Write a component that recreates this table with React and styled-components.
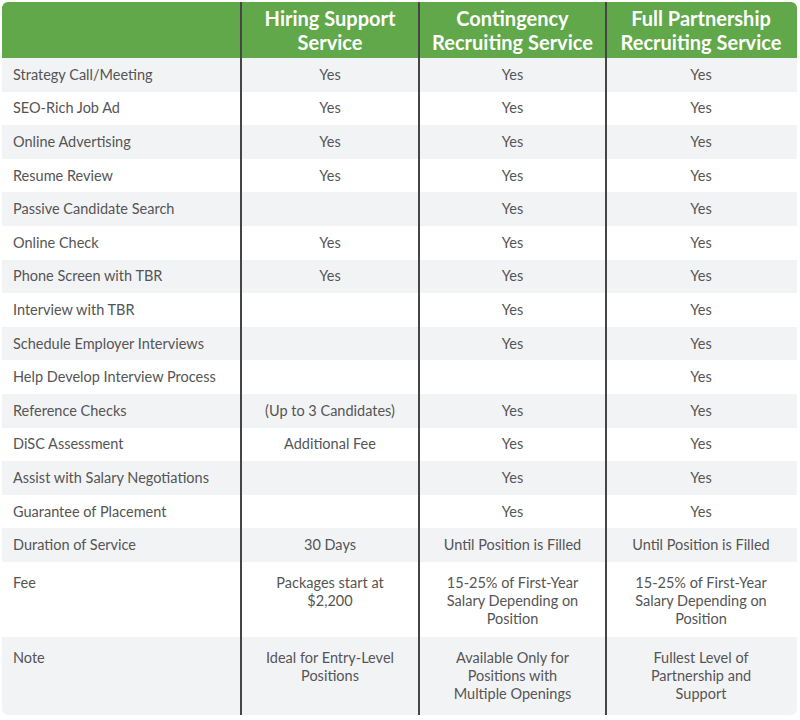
import React from 'react'
import styled, { createGlobalStyle } from 'styled-components'

const GlobalStyle = createGlobalStyle`
  * { box-sizing: border-box; }
  body {
    margin: 0;
    background: #ffffff;
    font-family: Lato, "Liberation Sans", sans-serif;
  }
`;

const headerLines = [
  ['Hiring Support', 'Service'],
  ['Contingency', 'Recruiting Service'],
  ['Full Partnership', 'Recruiting Service'],
];

// label, hiring, contingency, full
const rows = [
  ['Strategy Call/Meeting', 'Yes', 'Yes', 'Yes'],
  ['SEO-Rich Job Ad', 'Yes', 'Yes', 'Yes'],
  ['Online Advertising', 'Yes', 'Yes', 'Yes'],
  ['Resume Review', 'Yes', 'Yes', 'Yes'],
  ['Passive Candidate Search', '', 'Yes', 'Yes'],
  ['Online Check', 'Yes', 'Yes', 'Yes'],
  ['Phone Screen with TBR', 'Yes', 'Yes', 'Yes'],
  ['Interview with TBR', '', 'Yes', 'Yes'],
  ['Schedule Employer Interviews', '', 'Yes', 'Yes'],
  ['Help Develop Interview Process', '', '', 'Yes'],
  ['Reference Checks', '(Up to 3 Candidates)', 'Yes', 'Yes'],
  ['DiSC Assessment', 'Additional Fee', 'Yes', 'Yes'],
  ['Assist with Salary Negotiations', '', 'Yes', 'Yes'],
  ['Guarantee of Placement', '', 'Yes', 'Yes'],
  ['Duration of Service', '30 Days', 'Until Position is Filled', 'Until Position is Filled'],
];

const tallRows = [
  {
    label: 'Fee',
    cells: [
      ['Packages start at', '$2,200'],
      ['15-25% of First-Year', 'Salary Depending on', 'Position'],
      ['15-25% of First-Year', 'Salary Depending on', 'Position'],
    ],
    height: 75,
  },
  {
    label: 'Note',
    cells: [
      ['Ideal for Entry-Level', 'Positions'],
      ['Available Only for', 'Positions with', 'Multiple Openings'],
      ['Fullest Level of', 'Partnership and', 'Support'],
    ],
    height: 78,
  },
];

const App = () => {
  return (
    <>
      <GlobalStyle />
      <StPage>
        <StTable>
          <StHeader>
            <StHeadCell />
            {headerLines.map((lines) => (
              <StHeadCell key={lines.join(' ')}>
                {lines.map((l) => <div key={l}>{l}</div>)}
              </StHeadCell>
            ))}
          </StHeader>

          {rows.map((r, i) => (
            <StRow key={r[0]} $striped={i % 2 === 0}>
              <StLabel>{r[0]}</StLabel>
              <StCell>{r[1]}</StCell>
              <StCell>{r[2]}</StCell>
              <StCell>{r[3]}</StCell>
            </StRow>
          ))}

          {tallRows.map((r, i) => (
            <StRow key={r.label} $striped={(rows.length + i) % 2 === 0} $height={r.height}>
              <StLabel $tall>{r.label}</StLabel>
              {r.cells.map((lines, j) => (
                <StCell key={j} $tall>
                  {lines.map((l, k) => <div key={k}>{l}</div>)}
                </StCell>
              ))}
            </StRow>
          ))}
        </StTable>
      </StPage>
    </>
  )
}

export default App

const grid = `
  display: grid;
  grid-template-columns: 238px 178px 187px 190px;
`;

const StPage = styled.div`
  width: 800px;
  height: 720px;
  padding: 2px 3px 0 2px;
`;

const StTable = styled.div`
  width: 795px;
  border-radius: 6px;
  overflow: hidden;
`;

const StHeader = styled.div`
  ${grid}
  height: 56px;
  background-color: #60a84a;
`;

const StHeadCell = styled.div`
  display: flex;
  flex-direction: column;
  justify-content: center;
  align-items: center;
  color: #ffffff;
  font-size: 20px;
  font-weight: 700;
  line-height: 24px;
  text-align: center;
  & + & {
    border-left: 2px solid #454545;
  }
`;

const StRow = styled.div`
  ${grid}
  height: ${({ $height }) => ($height ? `${$height}px` : '33.6px')};
  background-color: ${({ $striped }) => ($striped ? '#f2f3f5' : '#ffffff')};
  color: #555555;
  font-size: 14.5px;
  line-height: 18px;
`;

const StLabel = styled.div`
  display: flex;
  align-items: ${({ $tall }) => ($tall ? 'flex-start' : 'center')};
  padding: ${({ $tall }) => ($tall ? '12px 0 0 11px' : '0 0 0 11px')};
`;

const StCell = styled.div`
  display: flex;
  flex-direction: column;
  align-items: center;
  justify-content: ${({ $tall }) => ($tall ? 'flex-start' : 'center')};
  padding-top: ${({ $tall }) => ($tall ? '12px' : '0')};
  text-align: center;
  border-left: 2px solid #454545;
`;
